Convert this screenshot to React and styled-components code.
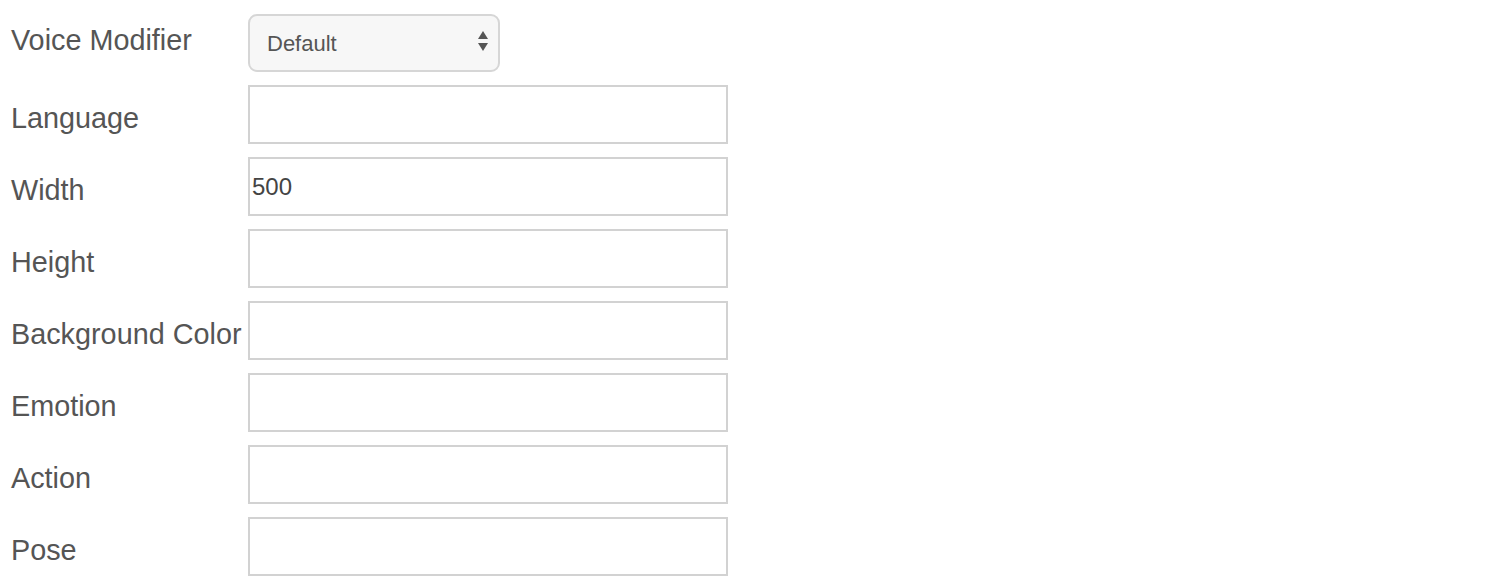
import React from 'react';
import styled, {createGlobalStyle} from 'styled-components';

const GlobalStyle = createGlobalStyle`
body{
    margin:0;
    background:#fff;
    font-family:"Liberation Sans", Arial, sans-serif;
}
`;

const Form = styled.form`
display:grid;
grid-template-columns:237px 480px;
row-gap:13px;
padding:14px 0 0 11px;
`;

const Label = styled.label`
align-self:start;
padding-top:${props => props.top}px;
font-size:28.8px;
line-height:32px;
color:#555;
white-space:nowrap;
`;

const SelectWrap = styled.div`
position:relative;
width:252px;
height:58px;
`;

const Select = styled.select`
appearance:none;
-webkit-appearance:none;
width:100%;
height:100%;
box-sizing:border-box;
border:2px solid #d6d6d6;
border-radius:9px;
background:#f7f7f7;
padding:0 30px 0 17px;
font-family:"Liberation Sans", Arial, sans-serif;
font-size:22px;
color:#555;
outline:none;
`;

const Arrows = styled.svg`
position:absolute;
right:12px;
top:17px;
pointer-events:none;
`;

const Input = styled.input`
width:480px;
height:59px;
box-sizing:border-box;
border:2px solid #d2d2d2;
border-radius:0;
padding:0 2px;
font-family:"Liberation Sans", Arial, sans-serif;
font-size:24px;
color:#444;
background:#fff;
outline:none;
`;

const fields = [
    {name:'language', label:'Language', value:''},
    {name:'width', label:'Width', value:'500'},
    {name:'height', label:'Height', value:''},
    {name:'bgcolor', label:'Background Color', value:''},
    {name:'emotion', label:'Emotion', value:''},
    {name:'action', label:'Action', value:''},
    {name:'pose', label:'Pose', value:''},
];

export default function App(){
    return(
        <>
            <GlobalStyle/>
            <Form onSubmit={e => e.preventDefault()}>
                <Label htmlFor="voice" top={10}>Voice Modifier</Label>
                <SelectWrap>
                    <Select id="voice" defaultValue="default">
                        <option value="default">Default</option>
                    </Select>
                    {/* up / down arrows */}
                    <Arrows width="10" height="22" viewBox="0 0 10 22">
                        <path d="M5 0 L10 8 L0 8 Z" fill="#555"/>
                        <path d="M0 12 L10 12 L5 20 Z" fill="#555"/>
                    </Arrows>
                </SelectWrap>
                {fields.map(f => (
                    <React.Fragment key={f.name}>
                        <Label htmlFor={f.name} top={17}>{f.label}</Label>
                        <Input id={f.name} type="text" defaultValue={f.value}/>
                    </React.Fragment>
                ))}
            </Form>
        </>
    );
}
